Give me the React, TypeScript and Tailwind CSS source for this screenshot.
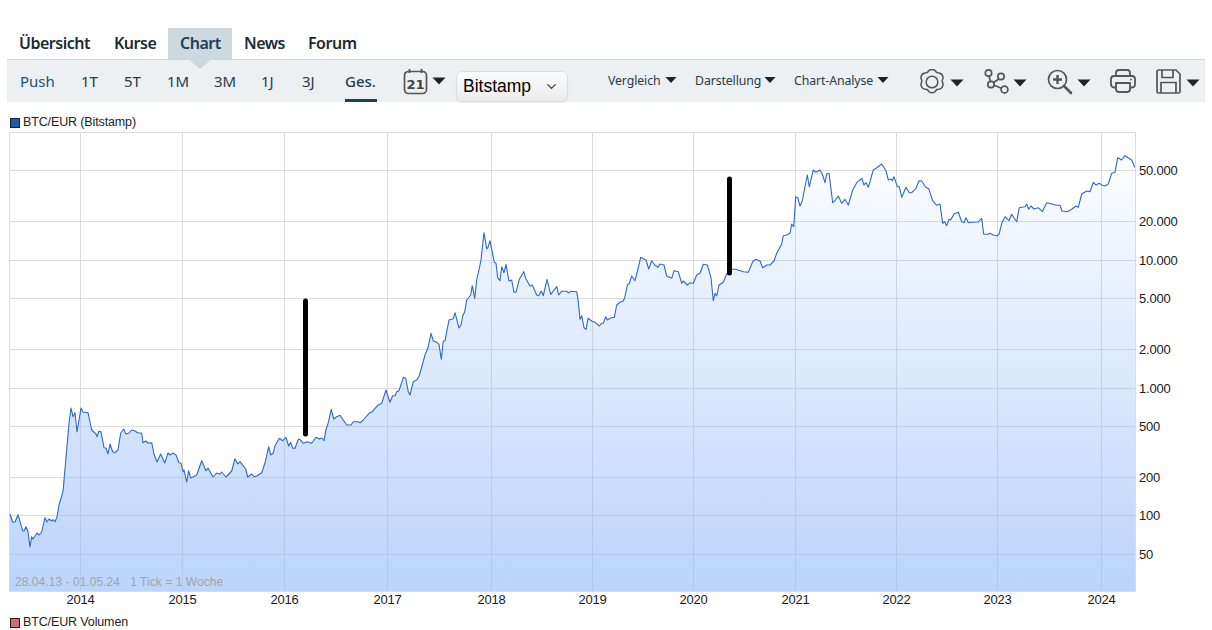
import { ChevronDown } from 'lucide-react'

const mainTabs = [
  { label: 'Übersicht', cls: 'w-[95px]' },
  { label: 'Kurse', cls: 'w-[54px]' },
  { label: 'Chart', cls: 'w-[64px] pl-[12px] bg-[#cdd8df] text-[#1d4057]', active: true },
  { label: 'News', cls: 'w-[76px] pl-[12px]' },
  { label: 'Forum', cls: 'w-[64px]' },
]

const periods = [
  { label: 'Push', cls: 'w-[61px] text-[#23506f]' },
  { label: '1T', cls: 'w-[43px]' },
  { label: '5T', cls: 'w-[43px]' },
  { label: '1M', cls: 'w-[47px]' },
  { label: '3M', cls: 'w-[47px]' },
  { label: '1J', cls: 'w-[41px]' },
  { label: '3J', cls: 'w-[43px]' },
  { label: 'Ges.', cls: 'w-[58px] text-[#1d4057] font-medium', active: true },
]

const linePoints =
  '10,514 12.7,522 15,522 18,514.7 22.7,530.7 24,531 26,526.7 28,531.7 30,547 31.7,536.7 33,539 37,533 39,535 41.7,532 45,517.7 47,522 49,519 51.7,521 53,519.7 55,521.7 57,517 59,505 63,491.7 69,423 71,408 73,416.7 75,412.7 77,432 81,408 83,412 88,412.7 91.7,430 96,434 97,436.7 99,431 101,431.7 104,447.7 106,448 108,454 110,444 112.7,451.7 115,452.7 118,450 120.7,433 123.7,429 126,434 129,433 131.7,430 135,431 138,433 141.7,433 143,442.7 145.7,441 148,443 151.7,442.7 154,454 157,462 160.7,454 164.7,463 168,453 170,455 173,453 176,455 179,462.7 181,463 183,471.7 184,470 186.7,482 188.7,470.7 190.7,478 193,477 196.7,475 201.7,460.7 206,470.7 208,468 213,477 216.7,473 220,474 221.7,472 226,477 231.7,471 235,458.7 237.7,464 240,461.7 245.7,469 247.7,477 251.7,474 254,476.7 256.7,476 261.7,472.7 265,463 268.7,446.7 270.7,455 273.3,453 275,445.7 279.3,438.3 282.7,440.7 286,437.3 288.7,446 290.7,442.3 292.7,448.3 295,448.3 298.3,439.3 300,439.3 ' +
  '303.3,443.3 307.3,441.7 311.7,443.3 316,437.3 319.3,439 321.7,438 324,440.7 326,429.3 327.7,425 331.3,409.3 333.7,419 336.7,416.7 340,415.3 346.7,425 351,425 353.3,421.7 358.3,421.7 360,422.7 363.3,420 369,413.3 372.3,411.7 375,408.3 378.3,405 381.7,403.3 386,390 390,402.3 392.7,395.7 395,395.7 396.7,391.7 399,390.7 403.3,377.3 405.7,378.3 408.3,391.7 410,395 413.3,381.7 416.7,380 419.3,375.7 425,355 428.3,346.7 431,333.3 433.3,341 436.7,342.3 439,344.3 441.3,359.3 443.3,341 445,340.7 449,320 453.3,318.7 455,312.7 459,328 461,325 462.7,316 464.7,311.7 466.7,300 470.7,295 472.3,285.7 474.7,298.3 476.7,280 479.3,268.3 481,260 484,232.7 486.7,249 488,247.3 490,240.7 494.3,262.3 496,263.3 497.7,277.7 500,280.7 501.7,266.7 504,272.7 506,264.3 509,281 511.7,280 514,292.3 516,292.3 519.3,279.3 523.7,271.7 526,279 530,286 532.3,285 536.7,295 538.7,295.7 541.3,291 543.3,295.7 547,279.3 550.7,294.3 556.7,286.7 558.7,295 561.7,291.3 566.7,291.3 568.7,293 570.7,291.3 576.7,291.7 ' +
  '578.3,301.7 580,319.3 581.7,315.7 584,327.7 586,329.3 588,318.3 591.7,321 595,322.3 599.3,326 601.7,323.3 603.3,323.3 605.7,316.7 607.3,320 610.7,318 614.3,317.3 616.7,305 620,302.3 623.3,301 625,296.7 627.3,285 629.3,283.3 631.7,276 635,280.7 637.7,270 640.7,257.3 646,260 648.7,269 651.7,260.7 654.7,265 658,267.3 660,264 664,265 666.7,276 671.7,278.3 674,270.7 678.3,271.7 681.7,283.3 683.3,281 687.3,285 690,282.7 693.3,283.3 696.7,275 700,273.3 703.3,264.3 707.3,265 711,277.7 713.3,300.7 715,293.3 716.7,296 719,285 723.3,282.3 726.7,274 732.3,269.3 735.7,269.3 743.3,271.7 748.3,272.3 752.7,261.7 755.7,259.3 760,261 762.7,267.7 766.7,265 770,265 774,261 776.7,253.3 781.7,244 783.3,235.7 786.7,235 790,233.3 791.7,224 793.7,226.7 795.7,196.7 797.7,197.7 800,206 802.3,200.7 807.3,175 809.3,186.7 813.3,170 815.7,172.3 820,170 822.3,174 825,182.7 826.7,174 829,173.3 832.7,202.7 835,200.7 838.3,196 841.7,203.3 845,199.3 848.3,205 852.7,190 856.7,182.7 861.7,178.3 864,185 866,182.7 868.3,187.3 ' +
  '873.3,170 876.7,167.7 881.7,164 886,170.7 888.3,180 890.7,179 892.3,180.7 894,176.7 897.3,186.7 899.3,186.7 901.7,197.3 906,187.3 909.3,192.7 911.7,192.7 916,188.3 919,180.7 921.7,181 925.7,187.3 928.7,188.7 932.7,200.7 936.7,205.3 940,204 942.7,223.3 944.7,221.7 946.7,225.7 949,219.3 950.7,220 954,214 958.3,212.3 961.7,221.7 964,222.7 966,217.7 968.3,222.7 973.3,222.3 978.3,222 981.7,218.3 983.7,234.3 988.3,234.3 990,233.3 993.3,235 997.3,236 999.3,233.3 1001.7,223.3 1005,216.7 1009,220.7 1011.7,214.3 1016.7,221.7 1019.3,207.7 1025,206.7 1026.7,204 1028.7,209.3 1031,206 1034,209 1038.3,207.7 1042.3,211.7 1046.7,202.7 1051.7,204 1056.7,205.3 1060,205.3 1062,211 1067.3,211.7 1071.7,209.3 1076,206 1078.3,207.3 1081.7,194 1086.7,191 1090,191.7 1093.3,182.3 1096,185 1099.3,183.3 1101.7,185 1105,186 1108.3,184 1111.7,173.3 1115,172.3 1117.7,157.7 1121.7,160 1125,155.7 1128.3,158 1131.7,160 1134.7,167.3'

const yLines = [170, 221, 260, 298, 349, 388, 426, 477, 515, 554]
const yLabels = ['50.000', '20.000', '10.000', '5.000', '2.000', '1.000', '500', '200', '100', '50']
const xLines = [80, 182, 284, 387, 491, 592, 693, 795, 896, 997, 1101]
const years = ['2014', '2015', '2016', '2017', '2018', '2019', '2020', '2021', '2022', '2023', '2024']

function Caret({ cls }: { cls: string }) {
  return (
    <svg width="14" height="8" viewBox="0 0 14 8" className={`shrink-0 ${cls}`}>
      <path d="M0.5 0.5H13.5L7 7.5Z" fill="#222" />
    </svg>
  )
}

function CalendarIcon() {
  return (
    <svg width="25" height="26" viewBox="0 0 25 26" fill="none" stroke="#555" strokeWidth="1.7">
      <rect x="1.5" y="2.500" width="22" height="22" rx="4" />
      <path d="M6.500 0v4M18.500 0v4" strokeWidth="1.8" />
      <text x="12.500" y="19.500" textAnchor="middle" fontSize="13" fontWeight="700" fill="#444" stroke="none" fontFamily="'DejaVu Sans', sans-serif">
        21
      </text>
    </svg>
  )
}

function GearIcon() {
  return (
    <svg width="26" height="26" viewBox="1 1 24 24" fill="none" stroke="#555" strokeWidth="1.4" className="shrink-0">
      <path d="M10.4 2.2c1.500-1 3.700-1 5.200 0 .7.500 1 1.700 2 2.200 1 .5 2.200.1 3 .5 1.600.9 2.700 2.800 2.600 4.600-.1.9-.9 1.700-.9 2.600 0 1 .8 1.800.9 2.700.1 1.800-1 3.700-2.600 4.600-.8.4-2 0-3 .5-1 .5-1.300 1.700-2 2.200-1.500 1-3.700 1-5.200 0-.7-.5-1-1.700-2-2.200-1-.5-2.200-.1-3-.5-1.600-.9-2.700-2.800-2.600-4.600.1-.9.9-1.700.9-2.700 0-.9-.8-1.700-.9-2.600-.1-1.800 1-3.700 2.600-4.600.8-.4 2 0 3-.5 1-.5 1.300-1.700 2-2.200Z" />
      <circle cx="13" cy="13" r="5.400" />
    </svg>
  )
}

function NetworkIcon() {
  return (
    <svg width="25" height="25" viewBox="0 0 25 25" fill="none" stroke="#555" strokeWidth="1.7" className="shrink-0">
      <circle cx="4.500" cy="4" r="3.200" />
      <circle cx="17" cy="7.500" r="3.200" />
      <circle cx="7" cy="15.500" r="3.200" />
      <circle cx="20.500" cy="20.500" r="3.400" />
      <path d="M5 7.200l1.500 5.100M15 10l-5.600 3.400M10.100 16.200l7.300 3" />
    </svg>
  )
}

function ZoomIcon() {
  return (
    <svg width="26" height="26" viewBox="0 0 26 26" fill="none" stroke="#555" strokeWidth="1.7" className="shrink-0">
      <circle cx="10.500" cy="10.500" r="9" />
      <path d="M6 10.500h9M10.500 6v9" strokeWidth="2.400" />
      <path d="M17 17l7 7" strokeWidth="2.600" strokeLinecap="round" />
    </svg>
  )
}

function PrinterIcon() {
  return (
    <svg width="26" height="24" viewBox="0 0 26 24" fill="none" stroke="#555" strokeWidth="1.8" className="shrink-0">
      <path d="M6 7V4a3 3 0 0 1 3-3h8a3 3 0 0 1 3 3v3" />
      <path d="M6 18.500H4a3 3 0 0 1-3-3V10a3 3 0 0 1 3-3h18a3 3 0 0 1 3 3v5.500a3 3 0 0 1-3 3h-2" />
      <path d="M6 14h14v6a3 3 0 0 1-3 3H9a3 3 0 0 1-3-3Z" />
      <circle cx="21" cy="10.500" r="0.900" fill="#555" stroke="none" />
    </svg>
  )
}

function SaveIcon() {
  return (
    <svg width="25" height="25" viewBox="0 0 25 25" fill="none" stroke="#555" strokeWidth="1.7" className="shrink-0">
      <path d="M1 2.500A1.500 1.500 0 0 1 2.500 1h17.500L24 5v17.500a1.500 1.500 0 0 1-1.500 1.500h-20A1.500 1.500 0 0 1 1 22.500Z" />
      <path d="M6 1v7.500h11V1" />
      <path d="M5 24V13.500h15V24" />
    </svg>
  )
}

function Chart() {
  return (
    <svg width="1212" height="484" viewBox="0 128 1212 484" className="block">
      <defs>
        <linearGradient id="area" x1="0" y1="155" x2="0" y2="591" gradientUnits="userSpaceOnUse">
          <stop offset="0" stopColor="rgb(147,187,248)" stopOpacity="0.03" />
          <stop offset="1" stopColor="rgb(147,187,248)" stopOpacity="0.63" />
        </linearGradient>
      </defs>
      <rect x="9.500" y="132.500" width="1126" height="459" fill="#fff" stroke="#dcdcdc" />
      {yLines.map((y) => (
        <line key={y} x1="9" x2="1135" y1={y + 0.5} y2={y + 0.5} stroke="#dcdcdc" />
      ))}
      {xLines.map((x) => (
        <line key={x} x1={x + 0.5} x2={x + 0.5} y1="132" y2="591" stroke="#dcdcdc" />
      ))}
      <polygon points={`10,591 ${linePoints} 1135,591`} fill="url(#area)" />
      <polyline points={linePoints} fill="none" stroke="#2e69c6" strokeWidth="1.1" strokeLinejoin="round" />
      <line x1="305.500" y1="301" x2="305.500" y2="434" stroke="#000" strokeWidth="5" strokeLinecap="round" />
      <line x1="729.500" y1="179" x2="729.500" y2="273" stroke="#000" strokeWidth="5" strokeLinecap="round" />
      <g fontFamily="'Liberation Sans', Arial, sans-serif" fontSize="13" fill="#1a1a1a" letterSpacing="-0.2">
        {yLabels.map((t, i) => (
          <text key={t} x="1139" y={yLines[i] + 5}>
            {t}
          </text>
        ))}
        {years.map((t, i) => (
          <text key={t} x={xLines[i] + 0.5} y="604" textAnchor="middle">
            {t}
          </text>
        ))}
      </g>
      <text x="15" y="586" fontFamily="'Liberation Sans', Arial, sans-serif" fontSize="12" fill="#a3a3a3" letterSpacing="0.05" xmlSpace="preserve">
        28.04.13 - 01.05.24   1 Tick = 1 Woche
      </text>
    </svg>
  )
}

export default function App() {
  return (
    <div className="w-[1212px] h-[630px] overflow-hidden bg-white pt-[28px] font-['Noto_Sans',sans-serif]">
      <div className="flex h-[31px] pl-[19px] text-[16px] font-semibold tracking-[-0.5px] text-[#1c2a33] leading-[31px]">
        {mainTabs.map((t) => (
          <div key={t.label} className={`relative ${t.cls}`}>
            {t.label}
            {t.active && (
              <span className="absolute left-[20px] top-[31px] z-10 w-0 h-0 border-x-[12px] border-x-transparent border-t-[10px] border-t-[#cdd8df]" />
            )}
          </div>
        ))}
      </div>

      <div className="mx-[7px] flex h-[43px] items-start border-t border-[#c9d6de] bg-[#edf0f3] pl-[13px] text-[#2a3a45]">
        {periods.map((p) => (
          <div key={p.label} className={`relative h-[42px] pt-[10px] text-[15px] leading-[22px] ${p.cls}`}>
            {p.label}
            {p.active && <span className="absolute left-0 top-[39px] h-[3px] w-[32px] bg-[#1d4057]" />}
          </div>
        ))}
        <div className="mt-[9px] flex items-start">
          <CalendarIcon />
          <Caret cls="ml-[4px] mt-[8px]" />
        </div>
        <div className="ml-[10px] mt-[11px] flex h-[31px] w-[112px] shrink-0 items-center justify-between rounded-[6px] border border-[#dedede] bg-gradient-to-b from-[#fbfbfb] to-[#ececec] pl-[6px] pr-[8px] font-['Liberation_Sans',sans-serif] text-[17.500px] text-black shadow-[0_1px_1px_rgba(0,0,0,0.08)]">
          Bitstamp
          <ChevronDown size={15} strokeWidth={2.2} color="#444" />
        </div>
        <div className="ml-[40px] mt-[10px] flex items-center whitespace-nowrap text-[12.300px] tracking-[-0.1px] leading-[22px]">
          <span className="w-[57px]">Vergleich</span>
          <Caret cls="w-[12px] mt-[-2px]" />
          <span className="ml-[18px] w-[69px]">Darstellung</span>
          <Caret cls="w-[12px] mt-[-2px]" />
          <span className="ml-[18px] w-[83px]">Chart-Analyse</span>
          <Caret cls="w-[12px] mt-[-2px]" />
        </div>
        <div className="ml-[30px] mt-[9px] flex items-start">
          <GearIcon />
          <Caret cls="ml-[5px] mt-[10px]" />
          <div className="ml-[20px] w-[25px]">
            <NetworkIcon />
          </div>
          <Caret cls="ml-[4px] mt-[10px]" />
          <div className="ml-[20px] w-[26px]">
            <ZoomIcon />
          </div>
          <Caret cls="ml-[4px] mt-[10px]" />
          <div className="ml-[19px] w-[26px]">
            <PrinterIcon />
          </div>
          <div className="ml-[20px] w-[25px]">
            <SaveIcon />
          </div>
          <Caret cls="ml-[5px] mt-[10px]" />
        </div>
      </div>

      <div className="flex h-[26px] items-center pl-[10px] pt-[15px] font-['Liberation_Sans',sans-serif] text-[12.500px] tracking-[-0.13px] text-[#222]">
        <span className="mr-[3px] h-[10px] w-[10px] border border-[#222] bg-[#1f5bb5]" />
        BTC/EUR (Bitstamp)
      </div>

      <Chart />

      <div className="flex h-[18px] items-center pl-[10px] pt-[3px] font-['Liberation_Sans',sans-serif] text-[12.500px] tracking-[-0.13px] text-[#222]">
        <span className="mr-[3px] h-[10px] w-[10px] border border-[#222] bg-[#d86a6a]" />
        BTC/EUR Volumen
      </div>
    </div>
  )
}
